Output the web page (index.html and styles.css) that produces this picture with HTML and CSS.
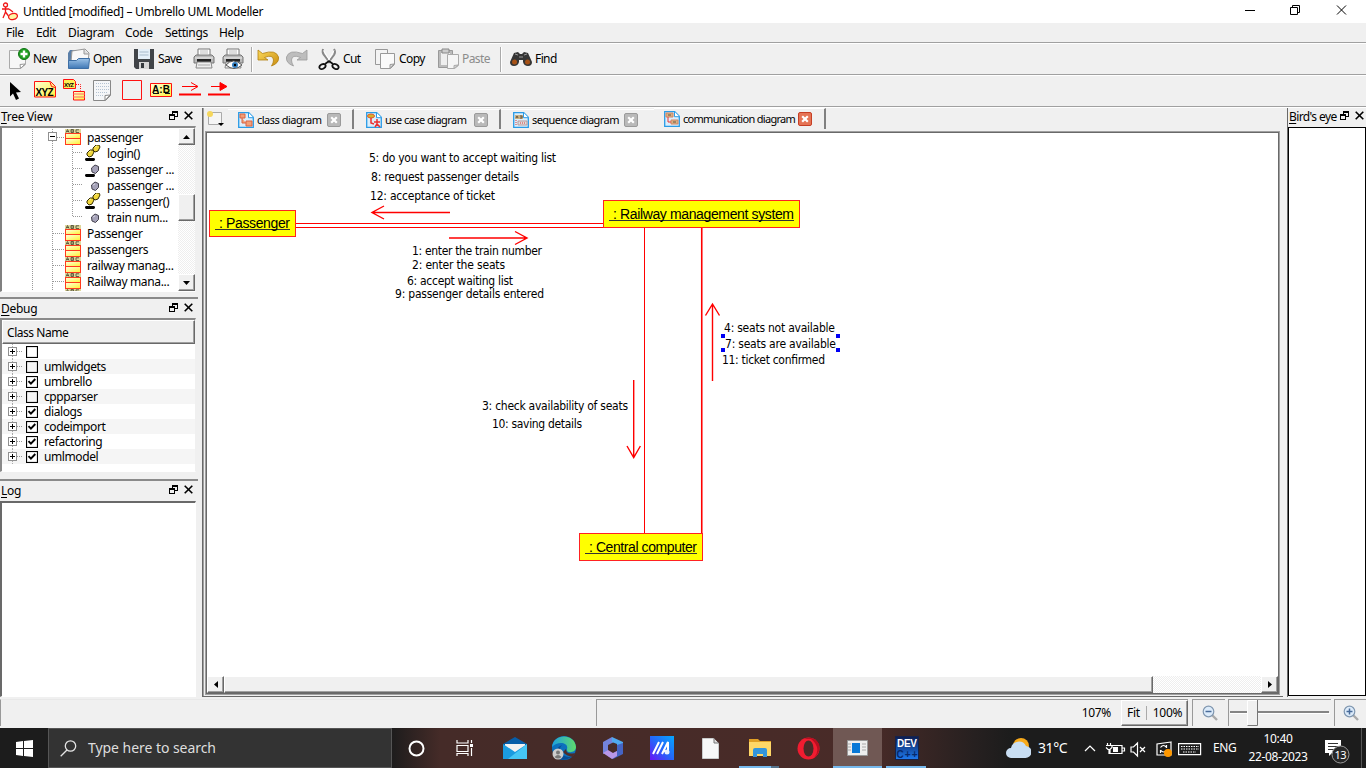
FILE: index.html
```html
<!DOCTYPE html>
<html lang="en">
<head>
<meta charset="utf-8">
<title>Untitled [modified] – Umbrello UML Modeller</title>
<link rel="stylesheet" href="styles.css">
</head>
<body>
<svg class="defs" width="0" height="0">
  <defs>
    <linearGradient id="blue" x1="0" y1="0" x2="0" y2="1"><stop offset="0" stop-color="#9cc3e8"/><stop offset="1" stop-color="#3f77b5"/></linearGradient>
    <linearGradient id="gold" x1="0" y1="0" x2="1" y2="1"><stop offset="0" stop-color="#fbd95b"/><stop offset="1" stop-color="#c98d10"/></linearGradient>
    <linearGradient id="yel" x1="0" y1="0" x2="1" y2="1"><stop offset="0" stop-color="#ffffd8"/><stop offset="1" stop-color="#fff23c"/></linearGradient>
    <linearGradient id="edge" x1="0" y1="0" x2="1" y2="0"><stop offset="0" stop-color="#1d9fe0"/><stop offset="1" stop-color="#5fdc6b"/></linearGradient>
    <linearGradient id="dev" x1="0" y1="0" x2="0" y2="1"><stop offset="0" stop-color="#0c1c50"/><stop offset="1" stop-color="#1e7af0"/></linearGradient>
    <linearGradient id="emm" x1="0" y1="1" x2="1" y2="0"><stop offset="0" stop-color="#6a12f5"/><stop offset=".5" stop-color="#2468fa"/><stop offset="1" stop-color="#05a8ff"/></linearGradient>
  </defs>
  <symbol id="float" viewBox="0 0 9 9"><path d="M3 0h6v2H3zM3 2h1v2H3zM8 2h1v4H6V5h2zM0 3h6v2H0zM0 5h1v4H0zM5 5h1v4H5zM0 8h6v1H0z"/></symbol>
  <symbol id="close" viewBox="0 0 9 9"><path d="M.7.7l7.6 7.6M8.3.7L.7 8.3" stroke="#000" stroke-width="1.6"/></symbol>
  <symbol id="classicon" viewBox="0 0 16 16"><rect width="16" height="16" fill="#ff3b1e"/><rect y="0" width="16" height="4" fill="#ded79b"/><path d="M1 3.5l1.500-3 1.500 3M2 2.500h2M6 .5v3h2.500v-3zM6 2h2M14 .8h-3v2.700h3" fill="none" stroke="#55523a" stroke-width=".9"/><rect x="1" y="5" width="14" height="4" fill="url(#yel)"/><rect x="1" y="10" width="14" height="5" fill="url(#yel)"/></symbol>
  <symbol id="method" viewBox="0 0 16 16"><path d="M2 8l3-3h3l1 2-2 4-3 1-2-2zM8 3l3-3h3l1 2-2 4-3 1-2-2z" fill="#f1d73b" stroke="#352d00"/><path d="M4 7l2-1M10 2l2-1" stroke="#fff5a2"/><rect x="0" y="13" width="10" height="3" rx="1.400"/></symbol>
  <symbol id="attr" viewBox="0 0 16 16"><path d="M6.500 8l3.500-3 3.500 1.500v4L10.500 13.500 7 12z" fill="#a5a2b8" stroke="#42404d"/><path d="M8 8l2-1" stroke="#d8d7e2"/></symbol>
  <symbol id="attr2" viewBox="0 0 16 16"><path d="M6.500 7l3.500-3 3.500 1.500v4L10.500 12.500 7 11z" fill="#a5a2b8" stroke="#42404d"/><rect x="0" y="13" width="10" height="3" rx="1.400"/></symbol>
  <symbol id="plus" viewBox="0 0 18 15"><path d="M4.500 0v15" stroke="#aaa" stroke-dasharray="1 1"/><path d="M9 7.500h5" stroke="#999" stroke-dasharray="1 1"/><rect x=".5" y="3.500" width="8" height="8" fill="#fff" stroke="#909090"/><path d="M2 7.500h5M4.500 5v5" stroke="#000"/></symbol>
  <symbol id="box" viewBox="0 0 12 12"><rect x=".5" y=".5" width="11" height="11" fill="none" stroke="#000" stroke-width="1.200"/></symbol>
  <symbol id="checked" viewBox="0 0 12 12"><rect x=".5" y=".5" width="11" height="11" fill="#fff" stroke="#000" stroke-width="1.200"/><path d="M2.500 5.200l2.400 2.500L9.300 3" fill="none" stroke="#000" stroke-width="1.900"/></symbol>
  <symbol id="gclass" viewBox="0 0 63 16"><path d="M30.500 0v16M50.500 0v16M51 8.500h11" fill="none" stroke="#999" stroke-dasharray="1 1"/></symbol>
  <symbol id="gopen" viewBox="0 0 63 16"><path d="M30.500 0v16M50.500 0v16M55 8.500h7" fill="none" stroke="#999" stroke-dasharray="1 1"/><rect x="46.500" y="3.500" width="8" height="8" fill="#fff" stroke="#909090"/><path d="M48 7.500h5" stroke="#000"/></symbol>
  <symbol id="gchild" viewBox="0 0 83 16"><path d="M30.500 0v16M50.500 0v16M70.500 0v16M71 7.500h9" fill="none" stroke="#999" stroke-dasharray="1 1"/></symbol>
  <symbol id="glast" viewBox="0 0 83 16"><path d="M30.500 0v16M50.500 0v16M70.500 0v8M71 7.500h9" fill="none" stroke="#999" stroke-dasharray="1 1"/></symbol>
  <symbol id="tabclose" viewBox="0 0 14 14"><rect x=".5" y=".5" width="13" height="13" rx="1.500" fill="#b9b9b9" stroke="#9a9a9a"/><path d="M4.200 4.200l5.600 5.600M9.800 4.200L4.200 9.800" stroke="#fff" stroke-width="2.200"/></symbol>
  <symbol id="tabcloser" viewBox="0 0 14 14"><rect x=".5" y=".5" width="13" height="13" rx="1.500" fill="#e57455" stroke="#c63f25"/><path d="M4.200 4.200l5.600 5.600M9.800 4.200L4.200 9.800" stroke="#fff" stroke-width="2.200"/></symbol>
  <symbol id="bluedoc" viewBox="0 0 16 16"><path d="M.7.7h10l4.600 4.600v10H.7z" fill="#dceefb" stroke="#2a9be6" stroke-width="1.300"/><path d="M10.500.7v5h5" fill="#fff" stroke="#2a9be6"/></symbol>
  <symbol id="lens" viewBox="0 0 16 16"><path d="M10 10l5 5" stroke="#aaa" stroke-width="2.400"/><circle cx="6.500" cy="6.500" r="5.300" fill="#dcebfa" stroke="#8097b0" stroke-width="1.200"/><path d="M3.500 6.500h6" stroke="#496b99" stroke-width="1.500"/></symbol>
  <symbol id="printer" viewBox="0 0 22 22"><path d="M5 1h12v8H5z" fill="#fff" stroke="#777"/><path d="M7 3h8M7 5h8" stroke="#bbb"/><path d="M1 9l2-2h16l2 2v6H1z" fill="#b9b9b9" stroke="#777"/><path d="M2 10h18" stroke="#eee"/><path d="M4 11h14v3H4z" fill="#222"/><path d="M4 14h14l1 6H3z" fill="#eee" stroke="#888"/><path d="M5 17h12" stroke="#aaa"/></symbol>
</svg>

<header class="titlebar">
  <svg class="applogo" width="18" height="20" viewBox="0 0 18 20"><g fill="#fff" stroke="#f01818" stroke-width="1.300"><circle cx="4.500" cy="3" r="2"/><path d="M4.500 5v5L2 16M4.500 10l3 4M1 7h7M8 7l4 3" fill="none"/><ellipse cx="12" cy="14.500" rx="4.500" ry="3" fill="#fff6a4" transform="rotate(-15 12 14.500)"/></g></svg>
  <h1>Untitled [modified] – Umbrello UML Modeller</h1>
  <svg class="wincontrols" width="110" height="22" viewBox="0 0 110 22" fill="none" stroke="#000"><path d="M4 10.500h10M49.500 7.500h7v7h-7zM51.500 7.500v-2h7v7h-2M96 5.500l9 9M105 5.500l-9 9"/></svg>
</header>
<nav class="menubar"><a class="m1">File</a><a class="m2">Edit</a><a class="m3">Diagram</a><a class="m4">Code</a><a class="m5">Settings</a><a class="m6">Help</a></nav>

<div class="toolbar">
  <div class="tool t-new"><svg width="22" height="22" viewBox="0 0 22 22"><path d="M1.500 2.500h16v14l-5 4h-11z" fill="#f7f7f7" stroke="#aaa"/><path d="M17 16l-5 .5.5 4z" fill="#fff" stroke="#999"/><circle cx="16" cy="6" r="5.500" fill="#1f9e22" stroke="#117414"/><path d="M16 2.500v7M12.500 6h7" stroke="#fff" stroke-width="2.400"/></svg><span>New</span></div>
  <div class="tool t-open"><svg width="24" height="22" viewBox="0 0 24 22"><path d="M1 5l2-3h6l2 3v14H1z" fill="#5b7fa8"/><path d="M5 3l13-2 4 4-1 9H4z" fill="#f8f8f8" stroke="#999"/><path d="M17 1v5h5" fill="#ddd" stroke="#999"/><path d="M1.500 12.500h8l2-2h11l-1 10h-20z" fill="url(#blue)" stroke="#3c6ea5"/></svg><span>Open</span></div>
  <div class="tool t-save"><svg width="22" height="22" viewBox="0 0 22 22"><path d="M1 1h20v20H3l-2-2z" fill="#414448"/><path d="M5 1h12v10H5z" fill="#e5eff8"/><path d="M6.500 4h9M6.500 7h9" stroke="#a9bbcb"/><path d="M6 14h10v7H6z" fill="#d6d6d6"/><path d="M8 15h3v5H8z" fill="#34383c"/></svg><span>Save</span></div>
  <svg class="t-print" width="22" height="22"><use href="#printer"/></svg>
  <svg class="t-preview" width="22" height="22" viewBox="0 0 22 22"><use href="#printer" width="22" height="22"/><path d="M4 17q7-8 16 0q-8 7-16 0" fill="#fff" stroke="#555"/><circle cx="13" cy="17" r="3" fill="#347fc1"/><circle cx="13" cy="17" r="1.200"/></svg>
  <i class="sep"></i>
  <svg class="t-undo" width="22" height="20" viewBox="0 0 22 20"><path d="M1 1v10h10L7.500 8.500Q16 5 16.500 11q0 3-2 6 8-3 7-9Q19 0 5.500 4.500z" fill="url(#gold)" stroke="#b38010" stroke-width=".8"/></svg>
  <svg class="t-redo" width="22" height="20" viewBox="0 0 22 20"><path transform="matrix(-1 0 0 1 22 0)" d="M1 1v10h10L7.500 8.500Q16 5 16.500 11q0 3-2 6 8-3 7-9Q19 0 5.500 4.500z" fill="#bdbdbd" stroke="#9a9a9a" stroke-width=".8"/></svg>
  <div class="tool t-cut"><svg width="22" height="22" viewBox="0 0 22 22"><path d="M5 1q-1 4 1 6l6 8M16 1q2 3 0 6l-6 8" fill="none" stroke="#888" stroke-width="2"/><path d="M5.500 2.500L12 13M16 2.500L10 13" stroke="#fff"/><g fill="none" stroke="#111" stroke-width="1.800"><ellipse cx="4.500" cy="18.500" rx="3.300" ry="2.200" transform="rotate(-30 4.500 18.500)"/><ellipse cx="17.500" cy="18.500" rx="3.300" ry="2.200" transform="rotate(30 17.500 18.500)"/><path d="M7 16l4-3 4 3"/></g></svg><span>Cut</span></div>
  <div class="tool t-copy"><svg width="22" height="22" viewBox="0 0 22 22"><path d="M1.500 1.500h12v15h-12z" fill="#f3f3f3" stroke="#999"/><path d="M6.500 5.500h14v11l-4 4h-10z" fill="#fafafa" stroke="#999"/><path d="M20 16l-4 .5v4z" fill="#ddd" stroke="#999"/></svg><span>Copy</span></div>
  <div class="tool t-paste disabled"><svg width="23" height="22" viewBox="0 0 23 22"><path d="M1.500 2.500h14v17h-14z" fill="#bbb" stroke="#999"/><path d="M4 5h9v12H4z" fill="#eee"/><path d="M5 1h7v4H5z" fill="#ccc" stroke="#888"/><path d="M10.500 6.500h11v11l-4 3h-7z" fill="#f5f5f5" stroke="#aaa"/><path d="M21 17l-4 .5v3z" fill="#ddd" stroke="#aaa"/></svg><span>Paste</span></div>
  <i class="sep"></i>
  <div class="tool t-find"><svg width="22" height="16" viewBox="0 0 22 16"><path d="M4 2l4-1 2 2h2l2-2 4 1 4 9q0 4-4 4t-5-4V9H9v2q-1 4-5 4t-4-4z" fill="#353535"/><path d="M5 3l3 1M14 4l3-1M9 6h4" stroke="#999"/><circle cx="4.500" cy="11" r="2.500" fill="#a75216"/><circle cx="17.500" cy="11" r="2.500" fill="#a75216"/></svg><span>Find</span></div>
</div>

<div class="toolbar diagramtools">
  <svg width="330" height="30" viewBox="0 76 330 30">
    <path d="M10 83l11 10-5 .5 3 6-3 1.500-3-6.500-3 3z"/>
    <path d="M34.500 82.500h16l5 5v10.500h-21z" fill="url(#yel)" stroke="#f11"/><path d="M50 83l1.500 4.500 4 1" fill="none" stroke="#f11"/>
    <text x="35.500" y="97" textLength="18" class="iconlabel">XYZ</text>
    <path d="M63.500 80.500h10l2 2v7h-12z" fill="#ffee55" stroke="#f11"/><path d="M76 85.500h4.500v6" fill="none" stroke="#f11" stroke-dasharray="1 1"/><path d="M73.500 92.500h11v8.500h-11z" fill="url(#yel)" stroke="#f11"/><path d="M73 95h12M73 98h12" stroke="#f66"/><text x="64" y="88" textLength="10" class="iconlabel tiny">XYZ</text>
    <path d="M93.500 81.500h17v15l-5 5h-12z" fill="#f5f6f8" stroke="#888"/><path d="M96 84.500h13M96 87.500h13M96 90.500h13M96 93.500h12M96 96.500h8" stroke="#b5c3d2" stroke-dasharray="1 1"/><path d="M110 96l-5 .5v5z" fill="#fff" stroke="#888"/>
    <path d="M122.500 81.500h19v19h-19z" fill="none" stroke="#f11"/>
    <path d="M150.500 84.500h21v13h-21z" fill="url(#yel)" stroke="#f11"/><path d="M153 94.500h6M165 94.500h5" stroke="#111"/><text x="152" y="94" textLength="18" class="iconlabel">A:B</text>
    <g stroke="#f00" fill="none"><path d="M179 95.500h22" stroke-width="2"/><path d="M182 87.500h15M191 83.500l7 4-7 4"/><path d="M208 95.500h22" stroke-width="2"/><path d="M211 87.500h14"/><path d="M220 83.500v8l7-4z" fill="#f00"/></g>
  </svg>
</div>

<main class="workspace">
  <aside class="docks">
    <section class="dock treepane">
      <header class="dockhead"><h2><u>T</u>ree View</h2><svg width="9" height="9"><use href="#float"/></svg><svg width="9" height="9"><use href="#close"/></svg></header>
      <div class="treewrap">
        <ul class="tree">
          <li><svg width="63" height="16"><use href="#gopen"/></svg><svg width="16" height="16"><use href="#classicon"/></svg><span>passenger</span></li>
          <li><svg width="83" height="16"><use href="#gchild"/></svg><svg width="16" height="16"><use href="#method"/></svg><span>login()</span></li>
          <li><svg width="83" height="16"><use href="#gchild"/></svg><svg width="16" height="16"><use href="#attr2"/></svg><span>passenger ...</span></li>
          <li><svg width="83" height="16"><use href="#gchild"/></svg><svg width="16" height="16"><use href="#attr"/></svg><span>passenger ...</span></li>
          <li><svg width="83" height="16"><use href="#gchild"/></svg><svg width="16" height="16"><use href="#method"/></svg><span>passenger()</span></li>
          <li><svg width="83" height="16"><use href="#glast"/></svg><svg width="16" height="16"><use href="#attr"/></svg><span>train num...</span></li>
          <li><svg width="63" height="16"><use href="#gclass"/></svg><svg width="16" height="16"><use href="#classicon"/></svg><span>Passenger</span></li>
          <li><svg width="63" height="16"><use href="#gclass"/></svg><svg width="16" height="16"><use href="#classicon"/></svg><span>passengers</span></li>
          <li><svg width="63" height="16"><use href="#gclass"/></svg><svg width="16" height="16"><use href="#classicon"/></svg><span>railway manag...</span></li>
          <li><svg width="63" height="16"><use href="#gclass"/></svg><svg width="16" height="16"><use href="#classicon"/></svg><span>Railway mana...</span></li>
          <li><svg width="63" height="16"><use href="#gclass"/></svg><svg width="16" height="16"><use href="#classicon"/></svg></li>
        </ul>
        <div class="vscroll"><button class="raised"><svg width="7" height="4"><path d="M0 4l3.500-4L7 4z"/></svg></button><i class="raised vthumb"></i><button class="raised"><svg width="7" height="4"><path d="M0 0l3.500 4L7 0z"/></svg></button></div>
      </div>
    </section>
    <section class="dock debugpane">
      <header class="dockhead"><h2><u>D</u>ebug</h2><svg width="9" height="9"><use href="#float"/></svg><svg width="9" height="9"><use href="#close"/></svg></header>
      <div class="debuglist">
        <div class="colhead">Class Name</div>
        <ul class="checks">
          <li><svg width="18" height="15"><use href="#plus"/></svg><svg width="12" height="12"><use href="#box"/></svg></li>
          <li><svg width="18" height="15"><use href="#plus"/></svg><svg width="12" height="12"><use href="#box"/></svg><span>umlwidgets</span></li>
          <li><svg width="18" height="15"><use href="#plus"/></svg><svg width="12" height="12"><use href="#checked"/></svg><span>umbrello</span></li>
          <li><svg width="18" height="15"><use href="#plus"/></svg><svg width="12" height="12"><use href="#box"/></svg><span>cppparser</span></li>
          <li><svg width="18" height="15"><use href="#plus"/></svg><svg width="12" height="12"><use href="#checked"/></svg><span>dialogs</span></li>
          <li><svg width="18" height="15"><use href="#plus"/></svg><svg width="12" height="12"><use href="#checked"/></svg><span>codeimport</span></li>
          <li><svg width="18" height="15"><use href="#plus"/></svg><svg width="12" height="12"><use href="#checked"/></svg><span>refactoring</span></li>
          <li><svg width="18" height="15"><use href="#plus"/></svg><svg width="12" height="12"><use href="#checked"/></svg><span>umlmodel</span></li>
        </ul>
      </div>
    </section>
    <section class="dock logpane">
      <header class="dockhead"><h2><u>L</u>og</h2><svg width="9" height="9"><use href="#float"/></svg><svg width="9" height="9"><use href="#close"/></svg></header>
      <div class="logview"></div>
    </section>
  </aside>

  <section class="editor">
    <div class="tabs">
      <svg class="newtab" width="20" height="18" viewBox="0 0 20 18"><path d="M2.500 2.500h13v12h-13z" fill="#f5f5f5" stroke="#aaa"/><circle cx="4" cy="4" r="3" fill="#f6d75c"/><path d="M12 13h6l-3 3z"/></svg>
      <div class="tab tab1"><svg width="16" height="16" viewBox="0 0 16 16"><use href="#bluedoc" width="16" height="16"/><path d="M2 2h5v4H2zM8 9h6v5H8zM4 6v5h4" fill="#f2a078" stroke="#dc6340"/></svg><span>class diagram</span><svg width="14" height="14"><use href="#tabclose"/></svg></div>
      <div class="tab tab2"><svg width="16" height="16" viewBox="0 0 16 16"><use href="#bluedoc" width="16" height="16"/><ellipse cx="5" cy="4" rx="3.500" ry="2" fill="#d6b42d" stroke="#df562d"/><path d="M5 6v5l3 1M11 7v6M8 10h6M9 15l2-3 3 3" fill="none" stroke="#eb3030" stroke-width="1.500"/></svg><span>use case diagram</span><svg width="14" height="14"><use href="#tabclose"/></svg></div>
      <div class="tab tab3"><svg width="16" height="16" viewBox="0 0 16 16"><use href="#bluedoc" width="16" height="16"/><path d="M2 3h8v4H2z" fill="#c8b080"/><path d="M3 6l1-2 1 2M7 4h2v2H7" fill="none" stroke="#654"/><path d="M5 9h9v4H5z" fill="#ddd" stroke="#b99"/><path d="M3 8v6M7 11h5" stroke="#d33" stroke-dasharray="1 1"/></svg><span>sequence diagram</span><svg width="14" height="14"><use href="#tabclose"/></svg></div>
      <div class="tab tab4"><svg width="16" height="16" viewBox="0 0 16 16"><use href="#bluedoc" width="16" height="16"/><path d="M2 2h7v4H2zM7 9h7v4H7z" fill="#d7b384" stroke="#d28464"/><path d="M4 6v5h3" fill="none" stroke="#e33"/><path d="M4 4h3M9 11h3" stroke="#654"/></svg><span>communication diagram</span><svg width="14" height="14"><use href="#tabcloser"/></svg></div>
    </div>
    <div class="canvasframe">
      <svg class="canvas" width="1071" height="543" viewBox="207 133 1071 543">
        <g class="links">
          <path d="M296 223.500h308M296 227.500h308M644.500 227v306"/>
          <path d="M701.750 227v306" stroke-width="1.600"/>
          <g stroke-width="1.400"><path d="M450 212.500h-77M384 206l-12 6.500 12 6.500M449 238h77M515 231.500l12 6.500-12 6.500"/><path d="M633.700 380v77M627 446l6.700 11.500 6.700-11.500M712.500 381v-77M705.500 315.500l7-11.500 7 11.500"/></g>
        </g>
        <g class="objects"><rect x="209.500" y="210.500" width="86" height="26"/><rect x="603.500" y="200.500" width="196" height="27"/><rect x="579.500" y="533.500" width="123" height="27"/></g>
        <path class="underlines" d="M215 229.500h75M609 220.500h185M585 553.500h112"/>
        <g class="names"><text x="219" y="228" textLength="71">: Passenger</text><text x="613" y="219" textLength="181">: Railway management system</text><text x="589" y="552" textLength="108">: Central computer</text></g>
        <g class="messages">
          <text x="369" y="162" textLength="187">5: do you want to accept waiting list</text>
          <text x="371" y="181" textLength="148">8: request passenger details</text>
          <text x="370" y="200" textLength="125">12: acceptance of ticket</text>
          <text x="412" y="255" textLength="130">1: enter the train number</text>
          <text x="412" y="269" textLength="93">2: enter the seats</text>
          <text x="407" y="285" textLength="106">6: accept waiting list</text>
          <text x="395" y="298" textLength="149">9: passenger details entered</text>
          <text x="724" y="332" textLength="111">4: seats not available</text>
          <text x="725" y="348" textLength="111">7: seats are available</text>
          <text x="722" y="364" textLength="103">11: ticket confirmed</text>
          <text x="482" y="410" textLength="146">3: check availability of seats</text>
          <text x="492" y="428" textLength="90">10: saving details</text>
        </g>
        <path fill="#0000f5" d="M721 334h4v4h-4zM836 334h4v4h-4zM721 348h4v4h-4zM836 348h4v4h-4z"/>
      </svg>
      <div class="hscroll"><button class="raised"><svg width="4" height="7"><path d="M4 0v7L0 3.500z"/></svg></button><i class="raised hthumb"></i><button class="raised"><svg width="4" height="7"><path d="M0 0v7l4-3.500z"/></svg></button></div>
    </div>
  </section>

  <aside class="birdseye">
    <header class="dockhead"><h2><u>B</u>ird's eye</h2><svg width="9" height="9"><use href="#float"/></svg><svg width="9" height="9"><use href="#close"/></svg></header>
    <div class="overview"></div>
  </aside>
</main>

<footer class="status">
  <div class="cell message"></div>
  <div class="cell zoomcell"><span class="percent">107%</span><div class="raised presets"><span>Fit</span><span class="hundred">100%</span></div></div>
  <div class="cell lens"><svg width="16" height="16"><use href="#lens"/></svg></div>
  <div class="cell slider"><svg width="103" height="27"><path d="M1 12h99" stroke="#858585" stroke-width="2"/><path d="M1 13.500h100" stroke="#fff"/><path d="M18.500.5h10v25h-10z" fill="#f0f0f0" stroke="#fff"/><path d="M28.500 0v25.500h-10" fill="none" stroke="#777"/></svg></div>
  <div class="cell lens last"><svg width="16" height="16" viewBox="0 0 16 16"><use href="#lens" width="16" height="16"/><path d="M6.500 3.500v6" stroke="#496b99" stroke-width="1.500"/></svg></div>
</footer>

<nav class="taskbar">
  <div class="start"><svg width="17" height="17" viewBox="0 0 17 17"><path fill="#fff" d="M0 2l7-1v7H0zM8 1l9-1v8H8zM0 9h7v7l-7-1zM8 9h9v8l-9-1z"/></svg></div>
  <div class="search"><svg width="17" height="17" viewBox="0 0 17 17" fill="none" stroke="#e4e4e4" stroke-width="1.300"><circle cx="10.500" cy="6" r="5.200"/><path d="M7 10l-6.300 6.300"/></svg><span>Type here to search</span></div>
  <div class="apps">
    <div class="app narrow"><svg width="17" height="17"><circle cx="8.500" cy="8.500" r="7" fill="none" stroke="#fff" stroke-width="2"/></svg></div>
    <div class="app narrow"><svg width="17" height="16" fill="none" stroke="#fff" stroke-width="1.200"><path d="M1 0v3h11V0M1 5.500h11v6H1zM1 16v-2.500h11V16M15.500 0v3M15.500 8v8"/><path d="M14 4h3v3h-3z" fill="#fff" stroke="none"/></svg></div>
    <div class="app first"><svg width="24" height="22" viewBox="0 0 24 22"><path d="M0 7L12 0l12 7v15H0z" fill="#075ea9"/><path d="M2 7h20v9H2z" fill="#f2f2f2"/><path d="M0 7l12 8L24 7v15H0z" fill="#1a9be0"/><path d="M24 7L5 22h19z" fill="#45c6f5"/></svg></div>
    <div class="app"><svg width="24" height="24" viewBox="0 0 24 24"><circle cx="12" cy="12" r="12" fill="#0c70bd"/><path d="M0 11C1-3 23-3 24 11c0 6-10 7-9 2 2-7-10-8-15-2z" fill="url(#edge)"/><path d="M10 9q-5 5 1 10 6 4 11 0-10 9-19 1 0-8 7-11z" fill="#074c94"/><path d="M14 13q0 6 9 4l-2 4q-7-1-10-5z" fill="#4d2c29"/><circle cx="6" cy="18" r="5.500" fill="#ccc"/><circle cx="6" cy="16.500" r="2" fill="#777"/><path d="M2.500 21q3.500-4 7 0-3.500 3-7 0" fill="#777"/></svg></div>
    <div class="app"><svg width="22" height="22" viewBox="0 0 22 22"><path d="M10 0L1 5v12l5-3V8l6-3z" fill="#7384dc"/><path d="M10 0l11 5v6l-6-1V7l-5-2z" fill="#4fa9ef"/><path d="M21 6v11l-10 5-5-3 9-5V8z" fill="#4564c4"/><path d="M1 16l5-3 5 3 4-2v5l-5 3z" fill="#b997e8"/></svg></div>
    <div class="app"><svg width="24" height="24" viewBox="0 0 24 24"><rect width="24" height="24" fill="url(#emm)"/><path d="M3 18L9 6M7 18l6-12M12 18l6-12v12M14 15h3" fill="none" stroke="#fff" stroke-width="2"/><circle cx="17" cy="16" r="2.500" fill="#e9f0ff"/></svg></div>
    <div class="app"><svg width="17" height="21" viewBox="0 0 17 21"><path d="M.5.5h11l5 5v15H.5z" fill="#f7f8f8" stroke="#c9cccc"/><path d="M12 .5v4.500h4.500" fill="#ddd" stroke="#777"/></svg></div>
    <div class="app running explorer"><svg width="22" height="20" viewBox="0 0 22 20"><path d="M0 1h9l2 2h11v15H0z" fill="#e1a025"/><path d="M0 4h22v14H0z" fill="#ffd767"/><path d="M4 12q0-2 2-2h10q2 0 2 2v7h-4v-3H8v3H4z" fill="#3495dc"/></svg></div>
    <div class="app"><svg width="23" height="23" viewBox="0 0 23 23"><circle cx="11.500" cy="11.500" r="11" fill="#f01c30"/><path d="M7 2q10-4 15 5 2 9-5 14Q25 11 14 2z" fill="#b80f20"/><ellipse cx="11.500" cy="11.500" rx="5" ry="8" fill="#4b2b28"/></svg></div>
    <div class="app running active"><svg width="21" height="16" viewBox="0 0 21 16"><path d="M.5.5h20v15H.5z" fill="#eee" stroke="#999"/><path d="M5 3h8v10H5z" fill="#0878d7"/><path d="M1 4h3M1 7h3M1 10h3M15 4h4M15 7h4M15 10h4" stroke="#aaa"/></svg></div>
    <div class="app running dev"><svg width="24" height="24" viewBox="0 0 24 24"><rect x=".5" y=".5" width="23" height="23" fill="url(#dev)" stroke="#16234b"/><text x="2" y="11" textLength="20">DEV</text><text x="1.500" y="22" textLength="21" class="cpp">C++</text></svg></div>
  </div>
  <div class="weather"><svg width="25" height="22" viewBox="0 0 25 22"><circle cx="15" cy="9" r="8" fill="#f8aa1b"/><path d="M5 21a5 5 0 010-10 8 8 0 0115-2 6 6 0 01-1 12z" fill="#c9def3"/></svg><span>31°C</span></div>
  <svg class="trayicons" width="126" height="20" viewBox="0 0 126 20" fill="none" stroke="#fff" stroke-width="1.200"><path d="M1 13l5-5 5 5M27 7.500h11v8H26v-4M38.500 10h2v3h-2M23.500 5v2M26.500 5v2M22 7.500h6v2l-2 2h-2l-2-2M25 12v4M47 9v5h2.500l4 4V5l-4 4zM56 9l5 5M61 9l-5 5"/><path d="M29 9h5v5h-5z" fill="#fff" stroke="none"/><path d="M87 4l-14 2v11h14zM76.500 9.500q3-4 6 0M82.500 7v3M82.500 12q-3 4-6 0M76.500 15v-3"/><circle cx="84" cy="15" r="4" fill="#ff9800" stroke="none"/><path d="M94.600 5.600h22v11h-22z"/><path d="M97 8.500h18M97 11h18M99 14h13" stroke-dasharray="1.500 1"/></svg>
  <span class="lang">ENG</span>
  <div class="clock"><time>10:40</time><time>22-08-2023</time></div>
  <svg class="notice" width="28" height="28" viewBox="0 0 28 28"><path d="M1 3h16v13H8l-3 3v-3H1z" fill="#fff"/><path d="M4 6.500h10M4 9.500h10M4 12.500h6" stroke="#333"/><circle cx="16.500" cy="17.500" r="8.500" fill="#272727" stroke="#999"/><text x="10.500" y="22" textLength="12">13</text></svg>
  <i class="peek"></i>
</nav>
</body>
</html>
```
FILE: styles.css
```css
* { box-sizing: border-box; }
body { margin: 0; width: 1366px; height: 768px; overflow: hidden; display: flex; flex-direction: column; background: #f0f0f0; color: #000; font: 12px/16px "Noto Sans", "Open Sans", sans-serif; letter-spacing: -.3px; }
h1, h2 { margin: 0; font-size: 12px; font-weight: 400; }
ul { list-style: none; margin: 0; padding: 0; }
svg { display: block; flex: none; }
span { white-space: nowrap; }
.defs { position: absolute; }
button { padding: 0; }
.raised { background: #f0f0f0; border: 1px solid; border-color: #fff #696969 #696969 #fff; box-shadow: inset -1px -1px #a0a0a0; }

.titlebar { height: 23px; flex: none; background: #fff; display: flex; align-items: center; }
.applogo { margin: 0 4px 0 1px; }
.titlebar h1 { letter-spacing: -.31px; }
.wincontrols { margin-left: auto; margin-right: 15px; margin-top: -2px; }
.menubar { height: 21px; flex: none; display: flex; align-items: center; padding-left: 6px; border-bottom: 1px solid #fff; box-shadow: inset 0 -1px #a0a0a0; letter-spacing: -.35px; }
.m1 { width: 30px; } .m2 { width: 32px; } .m3 { width: 57px; } .m4 { width: 40px; } .m5 { width: 54px; }

.toolbar { height: 32px; flex: none; display: flex; align-items: center; border-bottom: 1px solid #fff; box-shadow: inset 0 -1px #a0a0a0; padding: 0 0 1px 8px; letter-spacing: -.6px; }
.diagramtools { padding: 0; align-items: flex-start; }
.diagramtools svg { margin-top: -1px; }
.tool { display: flex; align-items: center; gap: 3px; }
.t-new { width: 59px; } .t-open { width: 66px; gap: 2px; } .t-save { width: 60px; }
.t-print { margin-right: 7px; } .t-preview { margin-right: 7px; }
.sep { width: 2px; height: 25px; background: #aaa; border-right: 1px solid #fff; }
.t-undo { margin-left: 4px; } .t-redo { margin-left: 7px; margin-right: 10px; }
.t-cut { width: 56px; } .t-copy { width: 63px; } .t-paste { width: 63px; gap: 2px; }
.disabled { color: #8c8c8c; }
.t-find { margin-left: 8px; }
.iconlabel { font: 700 10px "Liberation Sans", sans-serif; letter-spacing: 0; }
.tiny { font-size: 6px; }

.workspace { height: 589px; flex: none; display: flex; }
.docks { width: 198px; display: flex; flex-direction: column; }
.dockhead { display: flex; align-items: center; gap: 6px; height: 18px; padding: 0 5px 0 1px; }
.dockhead svg { margin-top: -3px; }
.dockhead h2 { flex: 1; white-space: nowrap; }
.dockhead u { text-underline-offset: 2px; }
.dock { border-bottom: 2px solid #8a8a8a; padding-bottom: 5px; }
.treepane { height: 191px; }
.treewrap { height: 166px; margin-right: 2px; border: solid; border-width: 2px 1px 1px 2px; border-color: #8a8a8a #f0f0f0 #fff #808080; background: #fff; display: flex; overflow: hidden; }
.tree { flex: 1; width: 170px; padding-top: 1px; letter-spacing: -.35px; }
.tree li { display: flex; align-items: center; height: 16px; }
.tree li span { margin-left: 6px; line-height: 15px; }
.vscroll { width: 17px; display: flex; flex-direction: column; background: repeating-conic-gradient(#fff 0 25%, #eee 0 50%) 0 0 / 2px 2px; }
.vscroll button { width: 17px; height: 17px; display: grid; place-items: center; flex: none; }
.vthumb { height: 27px; margin: 49px 0 auto; }
.debugpane { height: 182px; }
.debugpane .dockhead { height: 19px; }
.debuglist { height: 154px; margin-right: 2px; border: solid #8a8a8a; border-width: 2px 1px 1px 2px; border-right-color: #f0f0f0; border-bottom-color: #fff; background: #fff; }
.colhead { height: 24px; padding: 4px 4px 2px; background: #f0f0f0; border: 1px solid; border-color: #fff #696969 #696969 #fff; box-shadow: inset -1px -1px #a0a0a0; letter-spacing: -.45px; }
.checks li { height: 15px; display: flex; align-items: center; padding-left: 6px; line-height: 15px; letter-spacing: -.4px; }
.checks span { margin-left: 6px; }
.checks li:nth-child(even) { background: #f5f5f5; }
.logpane { flex: 1; border: 0; padding: 0; }
.logpane .dockhead { height: 19px; }
.logview { height: 196px; margin-top: 1px; margin-right: 2px; background: #fff; border: solid #696969; border-width: 2px 1px 1px 2px; border-right-color: #fff; border-bottom-color: #fff; }

.editor { width: 1081px; margin-left: 4px; border-left: 1px solid #696969; border-bottom: 1px solid #696969; box-shadow: inset 1px 0 #a0a0a0; padding-left: 1px; display: flex; flex-direction: column; }
.tabs { height: 23px; display: flex; align-items: flex-start; font-size: 11px; }
.newtab { margin: 2px 2px 0 2px; }
.tab { display: flex; align-items: center; gap: 3px; height: 20px; margin-top: 1px; border-top: 1px solid #fff; border-right: 2px solid #808080; padding-top: 1px; letter-spacing: -.5px; }
.tab span { flex: none; }
.tab svg:last-child { margin-left: auto; margin-right: 11px; }
.tab1 { width: 126px; padding-left: 10px; }
.tab2 { width: 147px; padding-left: 12px; letter-spacing: -.55px; }
.tab3 { width: 153px; padding-left: 12px; border-right: 0; letter-spacing: -.55px; }
.tab3 svg:last-child { margin-right: 16px; }
.tab4 { width: 172px; padding-left: 10px; height: 21px; padding-bottom: 1px; margin-top: 0; letter-spacing: -.7px; }
.tab4 svg:last-child { margin-right: 12px; }
.canvasframe { height: 564px; margin: 0 3px 0 1px; border: 1px solid #a0a0a0; background: #696969; padding: 1px; }
.canvas { background: #fff; }
.links { stroke: #f00; fill: none; }
.objects { fill: #ff0; stroke: #f22; }
.underlines { stroke: #333; }
.names { font: 14px "Liberation Sans", sans-serif; letter-spacing: 0; }
.messages { font: 12px "DejaVu Sans Condensed", "DejaVu Sans", sans-serif; font-stretch: condensed; letter-spacing: 0; }
.hscroll { display: flex; height: 17px; background: repeating-conic-gradient(#fff 0 25%, #eee 0 50%) 0 0 / 2px 2px; }
.hscroll button { width: 17px; height: 17px; display: grid; place-items: center; }
.hthumb { width: 929px; margin-right: auto; }
.birdseye { width: 79px; margin-left: 4px; border-left: 1px solid #696969; }
.birdseye .dockhead { padding-right: 4px; gap: 6px; letter-spacing: -.6px; }
.birdseye h2 { width: 45px; }
.overview { margin-top: 1px; height: 569px; background: #fff; border: 1px solid #000; }

.status { height: 31px; flex: none; display: flex; padding: 2px 0; gap: 4px; }
.cell { border-left: 1px solid #999; border-top: 1px solid #999; height: 27px; display: flex; align-items: center; }
.message { width: 592px; border-top-color: #e8e8e8; }
.zoomcell { width: 592px; }
.percent { margin-left: auto; margin-right: 10px; }
.presets { width: 67px; height: 26px; display: flex; align-items: center; padding-left: 5px; }
.hundred { border-left: 1px solid #aaa; margin-left: 6px; padding-left: 6px; line-height: 14px; }
.lens { width: 33px; padding-left: 9px; }
.slider { width: 103px; margin-left: -1px; }
.last { flex: 1; padding-left: 8px; margin-left: -1px; }

.taskbar { height: 40px; flex: none; display: flex; color: #fff; background: linear-gradient(90deg, #1c1c1c 0, #1c1c1c 390px, #452b28 440px, #492b28 870px, #262020 975px, #1c1c1c 1010px); letter-spacing: 0; }
.start { width: 48px; display: grid; place-items: center; }
.search { width: 344px; background: #333; border: 1px solid #555; display: flex; align-items: center; font-size: 14px; color: #dedede; gap: 11px; padding-left: 11px; letter-spacing: -.05px; }
.apps { display: flex; width: 590px; }
.app { width: 49px; display: grid; place-items: center; position: relative; }
.narrow { width: 48px; }
.first { margin-left: 2px; }
.running::after { content: ""; position: absolute; left: 4px; right: 5px; bottom: 0; height: 2px; background: #76b9ed; }
.explorer::after { border-right: 8px solid #55728a; }
.active { background: #705854; }
.active::after { left: 0; right: 0; }
.dev text { font: 700 10px "Liberation Sans", sans-serif; fill: #fff; }
.dev .cpp { fill: #07296c; }
.weather { margin-left: 24px; display: flex; align-items: center; gap: 7px; width: 78px; font-size: 14px; letter-spacing: -.4px; }
.trayicons { margin: 10px 2px 0 0; }
.lang { margin: 12px 0 0 1px; width: 35px; letter-spacing: -.4px; }
.clock { width: 60px; display: flex; flex-direction: column; align-items: center; padding-top: 2px; line-height: 18px; letter-spacing: -.35px; white-space: nowrap; }
.notice { margin: 9px 0 0 16px; }
.notice text { fill: #fff; font-size: 11px; }
.peek { margin-left: auto; margin-right: 4px; border-left: 1px solid #555; }
```
